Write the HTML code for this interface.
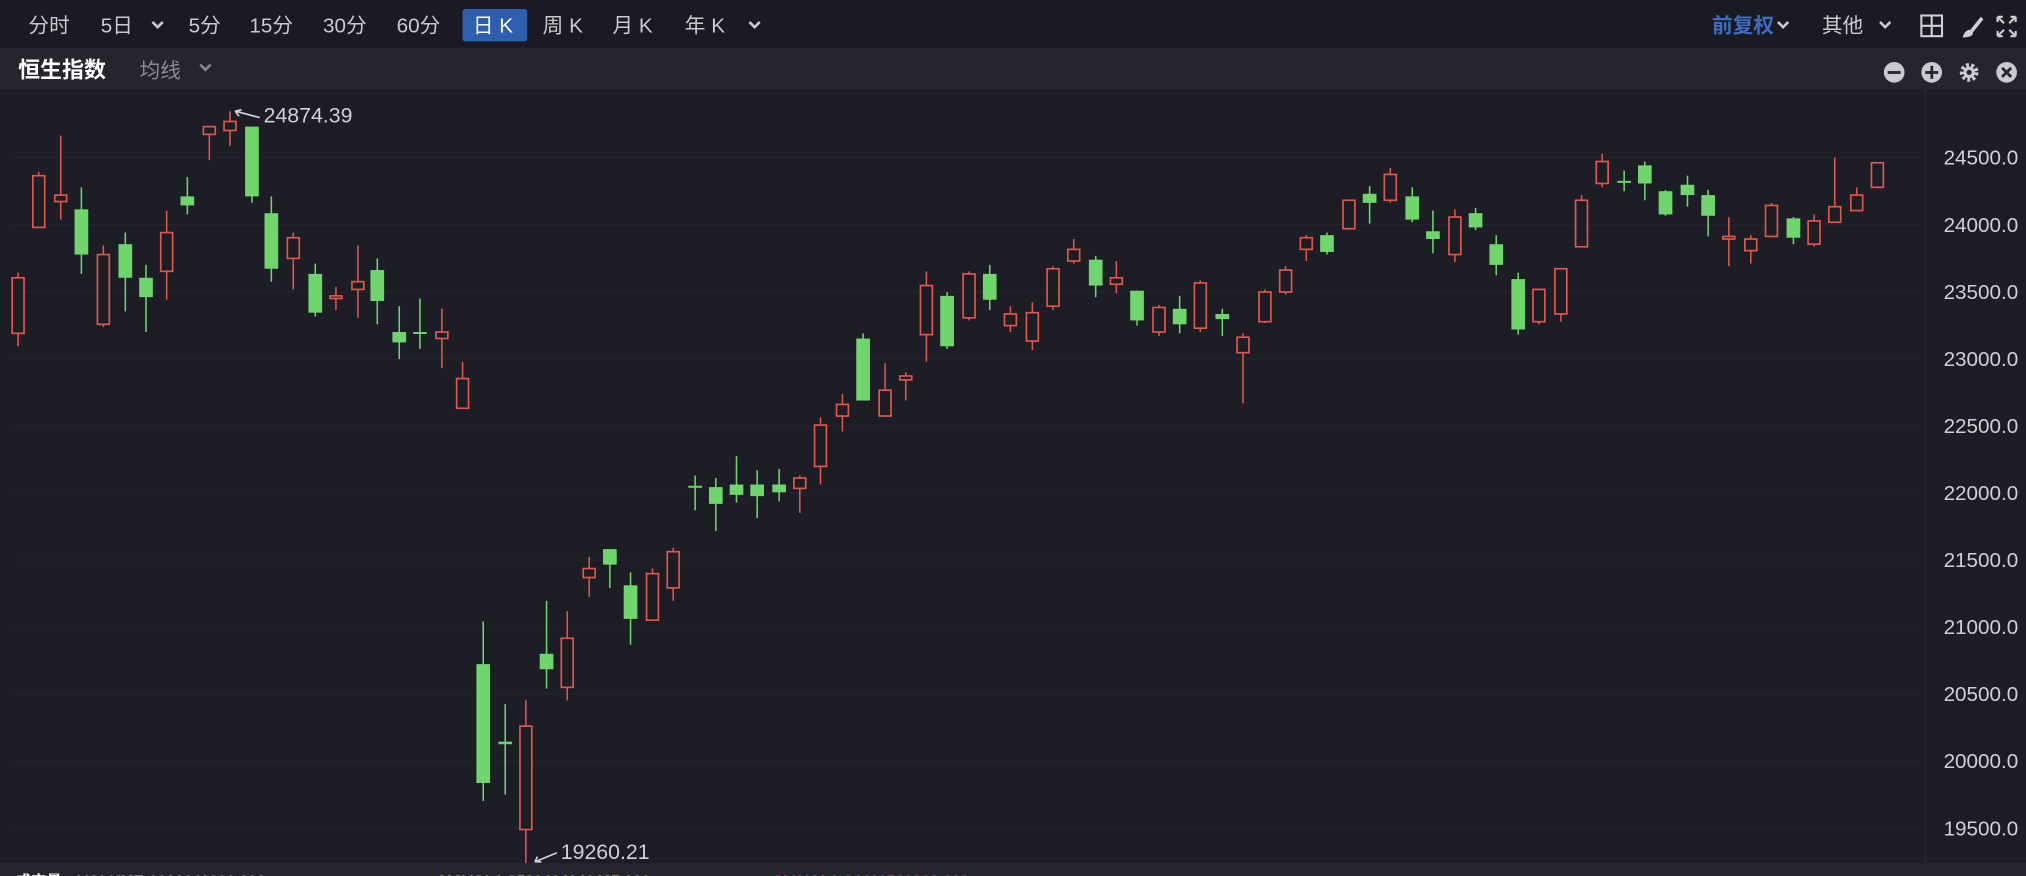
<!DOCTYPE html>
<html><head><meta charset="utf-8"><style>
html,body{margin:0;padding:0;background:#1c1d25;overflow:hidden}
svg{display:block}
text{font-family:"Liberation Sans","Noto Sans CJK SC",sans-serif}
</style></head><body>
<svg id="s" width="2026" height="876" viewBox="0 0 1568 678" preserveAspectRatio="none" xmlns="http://www.w3.org/2000/svg">
<rect width="1568" height="678" fill="#1c1d25"/>
<rect width="1568" height="37" fill="#1a1b22"/>
<rect y="37" width="1568" height="32" fill="#24252d"/>
<rect y="668" width="1568" height="10" fill="#24252d"/>
<line x1="1490" y1="69" x2="1490" y2="668" stroke="#2a2b33" stroke-width="1"/>
<g id="grid"></g>
<g font-size="16" fill="#c9cad0">
<text x="22" y="25">分时</text>
<text x="78" y="25">5日</text>
<text x="146" y="25">5分</text>
<text x="193" y="25">15分</text>
<text x="250" y="25">30分</text>
<text x="307" y="25">60分</text>
<rect x="358" y="7" width="50" height="25" rx="2" fill="#2e5eae"/>
<text x="366" y="25" fill="#fff">日 K</text>
<text x="420" y="25">周 K</text>
<text x="474" y="25">月 K</text>
<text x="530" y="25">年 K</text>
<text x="1325" y="25" fill="#3f6cc0" font-weight="bold">前复权</text>
<text x="1410" y="25">其他</text>
</g>
<g fill="none" stroke="#c9cad0" stroke-width="2">
<path d="M118 17l4 4 4-4"/><path d="M580 17l4 4 4-4"/><path d="M1455 17l4 4 4-4"/><path d="M1376 17l4 4 4-4"/>
<path d="M155 50l4 4 4-4" stroke="#8a8b92"/>
</g>
<g fill="none" stroke="#d0d1d6" stroke-width="1.6">
<rect x="1487" y="12" width="16" height="16"/><path d="M1495 12v16M1487 20h16"/>
<path d="M1519 29c1-4 3-6 6-6l2 2c0 3-3 4-8 4z" fill="#d0d1d6" stroke="none"/>
<path d="M1525 23l8-10 2 2-8 10z" fill="#d0d1d6" stroke="none"/>
<path d="M1546 13h4M1546 13v4M1560 13h-4M1560 13v4M1546 28h4M1546 28v-4M1560 28h-4M1560 28v-4M1547 14l4 4M1559 14l-4 4M1547 27l4-4M1559 27l-4-4"/>
</g>
<text x="14" y="60" font-size="17" font-weight="bold" fill="#fff">恒生指数</text>
<text x="108" y="60" font-size="16" fill="#8a8b92">均线</text>
<g>
<circle cx="1466" cy="56" r="8" fill="#c9cad0"/><rect x="1461" y="55" width="10" height="2.2" fill="#24252d"/>
<circle cx="1495" cy="56" r="8" fill="#c9cad0"/><rect x="1490" y="55" width="10" height="2.2" fill="#24252d"/><rect x="1494" y="51" width="2.2" height="10" fill="#24252d"/>
<circle cx="1524" cy="56" r="5.5" fill="none" stroke="#c9cad0" stroke-width="3.5" stroke-dasharray="2.2 1.7"/><circle cx="1524" cy="56" r="4.5" fill="#c9cad0"/><circle cx="1524" cy="56" r="2" fill="#24252d"/>
<circle cx="1553" cy="56" r="8" fill="#c9cad0"/><path d="M1549.5 52.5l7 7M1556.5 52.5l-7 7" stroke="#24252d" stroke-width="2.2"/>
</g>
<g id="c"></g>
<g fill="#d0d1d6" font-size="16.5">
<text x="204" y="95">24874.39</text>
<text x="434" y="665">19260.21</text>
</g>
<g stroke="#d0d1d6" stroke-width="1.3" fill="none">
<path d="M182 86l19 5M182 86l5 -1M182 86l3 4"/>
<path d="M431 660l-17 7M414 667l5 0M414 667l2 -4"/>
</g>
<g font-size="12" font-weight="bold">
<text x="12" y="686" fill="#fff">成交量</text>
<text x="60" y="686" fill="#c9cad0">VOLUME:3002341293.000</text>
<text x="340" y="686" fill="#e0d050">MAVOL1:2589464046487.000</text>
<text x="600" y="686" fill="#d050d0">MAVOL2:24462792929.000</text>
</g>
</svg>
<script>
var NS="http://www.w3.org/2000/svg";
function el(p,t,a){var e=document.createElementNS(NS,t);for(var k in a)e.setAttribute(k,a[k]);p.appendChild(e);return e;}
var g=document.getElementById('grid');
var labs=["24500.0","24000.0","23500.0","23000.0","22500.0","22000.0","21500.0","21000.0","20500.0","20000.0","19500.0"];
for(var i=0;i<11;i++){var y=122+i*51.9;
el(g,'line',{x1:8,x2:1490,y1:y,y2:y,stroke:'#22232b','stroke-width':1});
var t=el(g,'text',{x:1562,y:y+5.5,'font-size':16,fill:'#d0d1d6','text-anchor':'end'});t.textContent=labs[i];}
var d=[[14,'r',215,258,211,268],[30,'r',136,176,133,176],[47,'r',151,156,105,170],[63,'g',162,197,145,212],[80,'r',197,251,190,253],[97,'g',189,215,180,241],[113,'g',215,230,205,257],[129,'r',180,210,163,232],[145,'g',152,159,137,166],[162,'r',98,104,98,124],[178,'r',94,101,86,113],[195,'g',98,152,98,157],[210,'g',165,208,152,218],[227,'r',184,200,180,224],[244,'g',212,242,204,245],[260,'r',229,231,222,240],[277,'r',218,224,190,246],[292,'g',209,233,200,251],[309,'g',257,265,237,278],[325,'g',257,258,231,270],[342,'r',257,262,239,285],[358,'r',293,316,280,316],
[374,'g',514,606,481,620],[391,'g',574,576,545,615],[407,'r',562,642,542,668],[423,'g',506,518,465,533],[439,'r',494,532,473,542],[456,'r',440,447,431,462],[472,'g',425,437,425,455],[488,'g',453,479,443,499],[505,'r',444,480,440,480],[521,'r',427,455,424,465],[538,'g',376,377,368,395],[554,'g',377,390,370,411],[570,'g',375,383,353,389],[586,'g',375,384,364,401],[603,'g',375,381,363,388],[619,'r',370,378,368,397],[635,'r',329,361,323,375],[652,'r',313,322,305,334],[668,'g',262,310,258,310],[685,'r',302,322,281,322],[701,'r',291,294,288,310],[717,'r',221,259,210,280],[733,'g',229,268,226,270],[750,'r',212,246,210,248],[766,'g',212,232,205,240],[782,'r',243,252,237,257],[799,'r',242,264,234,271],[815,'r',208,237,206,240],[831,'r',193,202,185,204],[848,'g',201,221,198,230],[864,'r',215,220,202,227],[880,'g',225,248,225,252],[897,'r',238,257,236,260],[913,'g',239,251,229,258],[929,'r',219,254,217,257],[946,'g',243,247,239,260],[962,'r',261,273,258,312],[979,'r',226,249,224,250],[995,'r',209,226,206,228],[1011,'r',184,193,182,202],[1027,'g',182,195,180,197],[1044,'r',155,177,155,178],[1060,'g',150,157,144,173],[1076,'r',135,155,130,157],[1093,'g',152,170,145,172],[1109,'g',179,185,163,196],[1126,'r',168,197,162,203],[1142,'g',165,176,161,178],[1158,'g',189,205,182,213],[1175,'g',216,255,211,259],[1191,'r',224,249,224,251],[1208,'r',208,243,208,249],[1224,'r',155,191,151,191],[1240,'r',125,142,119,145],[1257,'g',140,141,132,148],[1273,'g',128,142,125,155],[1289,'g',148,166,147,167],[1306,'g',143,151,136,160],[1322,'g',151,167,147,183],[1338,'r',183,185,168,206],[1355,'r',185,194,182,204],[1371,'r',159,183,157,183],[1388,'g',169,184,168,189],[1404,'r',171,189,166,191],[1420,'r',160,172,122,172],[1437,'r',151,163,145,163],[1453,'r',126,145,126,145]];
var c=document.getElementById('c');
d.forEach(function(k){var x=k[0],col=k[1]=='r'?'#e0574c':'#6ed66c';
el(c,'line',{x1:x,x2:x,y1:k[4],y2:k[5],stroke:col,'stroke-width':1.2});
var h=Math.max(k[3]-k[2],1.5);
if(k[1]=='r'){el(c,'rect',{x:x-4.6,y:k[2],width:9.2,height:h,fill:'#1c1d25',stroke:col,'stroke-width':1.3});}
else{el(c,'rect',{x:x-5.3,y:k[2],width:10.6,height:h,fill:col});}
});
</script>
</body></html>
